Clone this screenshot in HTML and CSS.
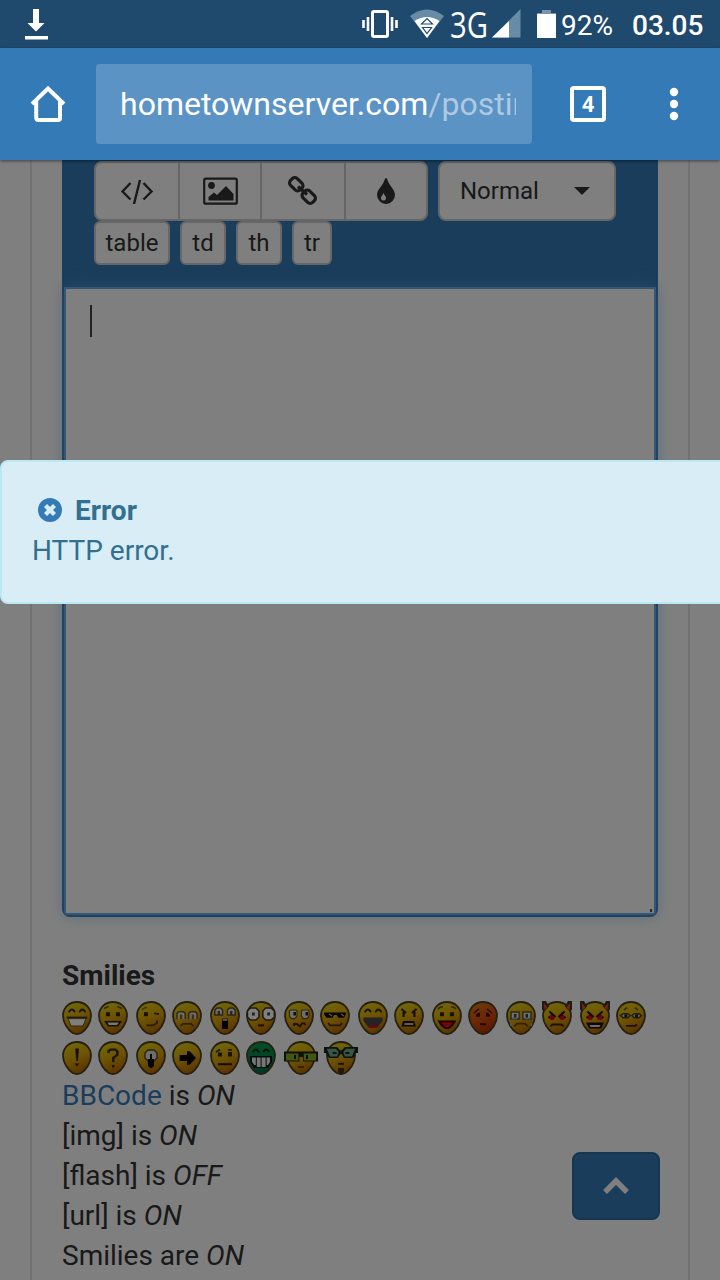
FILE: index.html
```html
<!DOCTYPE html>
<html lang="en">
<head>
<meta charset="utf-8">
<title>Post a reply</title>
<link rel="stylesheet" href="styles.css">
</head>
<body>
<svg class="defs" width="0" height="0" aria-hidden="true">
  <defs>
    <linearGradient id="yellow" x1="0.3" y1="0" x2="0.7" y2="1"><stop offset="0" stop-color="#e2d210"/><stop offset="0.45" stop-color="#dca808"/><stop offset="1" stop-color="#b06000"/></linearGradient>
    <linearGradient id="red" x1="0.2" y1="0" x2="0.7" y2="1"><stop offset="0" stop-color="#d87a10"/><stop offset="0.5" stop-color="#d85010"/><stop offset="1" stop-color="#b42c00"/></linearGradient>
    <linearGradient id="green" x1="0" y1="0" x2="0" y2="1"><stop offset="0" stop-color="#06a050"/><stop offset="1" stop-color="#027048"/></linearGradient>
    <path id="head" d="M7.500.5C11.500.5 14.500 3.400 14.500 7.400C14.500 11 11.900 14.600 9.600 16Q7.500 17 5.400 16C3.100 14.600.5 11 .5 7.400C.5 3.400 3.500.5 7.500.5Z" stroke="#4c4022" stroke-width=".9"/>
    <g id="carets" fill="none" stroke="#2a2004" stroke-width=".9"><path d="M3.300 5.600 4.500 4.300H5.400L6.600 5.600M8.600 5.600 9.700 4.300H10.600L11.800 5.600"/></g>
    <g id="horns"><path d="M0 0H2L3.600 2.600 1 5.500 0 4.200ZM15 0H13L11.400 2.600 14 5.500 15 4.200Z" fill="#3c3430"/><path d="M.8 1 2.700 3 1.300 4.800ZM14.200 1 12.300 3 13.700 4.800Z" fill="#f04812"/><path d="M2.400 0H5L3.500 1ZM10 0H12.600L11.500 1Z" fill="#ddd"/></g>
    <g id="rage"><circle cx="5" cy="8.100" r="1.400" fill="#e00808"/><circle cx="10" cy="8.100" r="1.400" fill="#e00808"/><path d="M3.700 5.200 6.800 8M11.300 5.200 8.200 8" stroke="#160c00" stroke-width="1"/><path d="M3.100 8.200H4M11 8.200H11.900" stroke="#200" stroke-width=".9"/></g>
  </defs>
</svg>

<header class="status">
  <svg class="download" width="24" height="32" viewBox="0 0 24 32"><path d="M9 1H15V15H20.500L12 23.500 3.500 15H9ZM1 28H24V31.500H1Z" fill="#fff"/></svg>
  <div class="status-right">
    <svg width="164" height="40" viewBox="360 4 164 40">
      <rect x="372.500" y="11.500" width="15" height="25" rx="1.500" fill="none" stroke="#fff" stroke-width="3"/>
      <path d="M363.500 20V28M368 17V31M392 17V31M396.500 20V28" stroke="#fff" stroke-width="2.600"/>
      <path d="M410 16Q427 3 444 16L427 38Z" fill="#688ba6"/>
      <path d="M414.500 21Q427 13 439.500 21L427 38Z" fill="#fff"/>
      <path d="M421.500 24H432.500L427 18.500ZM422.500 27.500H431.500L427 33.500Z" fill="#fff" stroke="#1f4a6e" stroke-width="1.200"/>
      <text x="450" y="38" textLength="38" lengthAdjust="spacingAndGlyphs" class="network">3G</text>
      <path d="M520.500 9V37.500H492Z" fill="#688ba6"/><path d="M509 21V37.500H492Z" fill="#fff"/>
    </svg>
    <svg class="battery" width="19" height="30" viewBox="0 0 19 30"><path d="M5 1H14V4H19V6H0V4H5Z" fill="#7896ae"/><path d="M0 5H19V29H0Z" fill="#fff"/></svg>
    <span class="percent">92%</span>
    <span class="clock">03.05</span>
  </div>
</header>

<nav class="browser">
  <svg class="home" width="36" height="36" viewBox="0 0 36 36"><path d="M2 18 18 2.500 34 18M6.200 15V31Q6.200 34 8.200 34H28Q30 34 30 32V15" fill="none" stroke="#fff" stroke-width="4"/></svg>
  <div class="address"><div class="url">hometownserver.com<span class="path">/postin</span></div></div>
  <div class="tabs">4</div>
  <svg class="more" width="10" height="34" viewBox="0 0 10 34"><circle cx="5" cy="5" r="4.200" fill="#fff"/><circle cx="5" cy="17" r="4.200" fill="#fff"/><circle cx="5" cy="29" r="4.200" fill="#fff"/></svg>
</nav>

<main class="viewport">
  <section class="panel">
    <div class="editor">
      <div class="toolbar">
        <div class="tools">
          <div class="group">
            <button class="btn code"><svg width="34" height="26" viewBox="0 0 34 26"><path d="M10.500 5 2.500 13.500 10.500 21.500M23.500 5 31.500 13.500 23.500 21.500M20 2 14 26" fill="none" stroke="#333" stroke-width="2.400"/></svg></button>
            <button class="btn image"><svg width="36" height="28" viewBox="0 0 36 28"><rect x="2.200" y="1.700" width="32.600" height="25" rx="1.500" fill="none" stroke="#333" stroke-width="2.200"/><circle cx="9.500" cy="8.500" r="3.400" fill="#333"/><path d="M6.500 23.500V20L12 15.500 15 18 24 9 31.500 17V23.500Z" fill="#333"/></svg></button>
            <button class="btn link"><svg width="30" height="30" viewBox="0 0 30 30"><g fill="none" stroke="#333" stroke-width="3.200"><rect x="1.500" y="3.500" width="13.500" height="9.500" rx="3.500" transform="rotate(45 8.250 8.250)"/><rect x="14" y="16" width="13.500" height="9.500" rx="3.500" transform="rotate(45 20.750 20.750)"/><path d="M10 10.500 19 18.500"/></g></svg></button>
            <button class="btn drop"><svg width="20" height="28" viewBox="0 0 20 28"><path d="M10 1Q11 1 11.500 3C13 9 19 12 19 18A9 9 0 0 1 1 18C1 12 7 9 8.500 3Q9 1 10 1Z" fill="#333"/><path d="M7.500 16C8 18 10 19 10 21A2.500 2.500 0 0 1 5 21C5 19 7 18 7.500 16Z" fill="#fff"/></svg></button>
          </div>
          <button class="btn select"><span>Normal</span><i class="arrow"></i></button>
        </div>
        <div class="tags">
          <button class="btn tag">table</button><button class="btn tag narrow">td</button><button class="btn tag narrow">th</button><button class="btn tag tiny">tr</button>
        </div>
      </div>
      <div class="message"><i class="caret"></i><i class="grip"></i></div>
    </div>
    <div class="info">
      <strong>Smilies</strong>
      <div class="smilies">
        <svg viewBox="0 0 15 17"><use href="#head" fill="url(#yellow)"/><use href="#carets"/><path d="M2.400 8.300H12.600" stroke="#443200"/><path d="M3 8.800H12L10.500 12.500H4.500Z" fill="#fff" stroke="#665020" stroke-width=".5"/></svg>
        <svg viewBox="0 0 15 17"><use href="#head" fill="url(#yellow)"/><path d="M3 3.700 5.300 2.800M9.700 2.800 12 3.700" stroke="#655000" stroke-width=".8"/><path d="M4 5.600H6V7.600H4ZM9 5.600H11V7.600H9Z" fill="#302400"/><path d="M3 10H12L10 12.800H5Z" fill="#2a2000"/><path d="M4.700 10.800H10.500L9.500 12H5.500Z" fill="#eee"/></svg>
        <svg viewBox="0 0 15 17"><use href="#head" fill="url(#yellow)"/><path d="M3 4.300 4.500 3.300H5.600" fill="none" stroke="#806400" stroke-width=".7"/><path d="M4 5.600H6V7.600H4Z" fill="#302400"/><path d="M9 6.200 11.500 6.500M5.300 12.200H8.500L10.500 11V9.700" fill="none" stroke="#4a3400" stroke-width=".9"/></svg>
        <svg viewBox="0 0 15 17"><use href="#head" fill="url(#yellow)"/><path d="M2.500 9V6.200L3.500 5.400H5.700L6.600 6.200V9M8.400 9V6.200L9.400 5.400H11.600L12.500 6.200V9" fill="#ddd" stroke="#5d4d1a" stroke-width=".7"/><path d="M3.900 6.700H5.200V9H3.900ZM9.800 6.700H11.100V9H9.800Z" fill="#846020"/><path d="M4.200 12.500 5.500 11.400H9.500L10.800 12.500" fill="none" stroke="#644000" stroke-width=".9"/></svg>
        <svg viewBox="0 0 15 17"><use href="#head" fill="url(#yellow)"/><path d="M2.400 7V4.500L3.500 3.500H5.400L6.300 4.500V7ZM8.700 7V4.500L9.800 3.500H11.500L12.600 4.500V7Z" fill="#ddd" stroke="#554b28" stroke-width=".7"/><path d="M3.800 5H5V7H3.800ZM10 5H11.200V7H10Z" fill="#554b30"/><path d="M6 8.800H9V14H6Z" fill="#090600"/><path d="M6.300 9H8.700V9.900H6.300Z" fill="#bbb"/></svg>
        <svg viewBox="0 0 15 17"><use href="#head" fill="url(#yellow)"/><path d="M2.200 3.500H5L6.500 5V8L5 9.500H2.200L.7 8V5ZM9.800 3.500H12.600L14.200 5V8L12.600 9.500H9.800L8.400 8V5Z" fill="#fff" stroke="#443420" stroke-width=".8"/><path d="M3 5.800H4.400V7.200H3ZM10.600 5.800H12V7.200H10.600Z" fill="#444"/><path d="M6 12.200H9" stroke="#382000"/></svg>
        <svg viewBox="0 0 15 17"><use href="#head" fill="url(#yellow)"/><path d="M3.200 4.500H6L6.500 5V7.500L5.500 8.800H3.700L2.700 7.500V5ZM9.400 4.500H12L12.500 5V7.500L11.500 8.800H9.700L8.700 7.500V5Z" fill="#ddd" stroke="#665020" stroke-width=".6"/><path d="M4.700 5.500H6V7.200H4.700ZM10.800 5.500H12V7.200H10.800Z" fill="#222"/><path d="M5 12.500V11.500H6.500L8 12.700 9 11.200H10.200L10.800 12" fill="none" stroke="#382000" stroke-width=".9"/></svg>
        <svg viewBox="0 0 15 17"><use href="#head" fill="url(#yellow)"/><path d="M2 5.800H13V6.600L12 8.400H9.300L8.300 7H7L6.300 8.400H3.300L2 6.600Z" fill="#100b00"/><path d="M4.500 6.500 6 7.500M10.500 6.500 12 7.500" stroke="#aaa" stroke-width=".7"/><path d="M4 11 5 12.200H10L11 11" fill="none" stroke="#4a2800" stroke-width=".9"/></svg>
        <svg viewBox="0 0 15 17"><use href="#head" fill="url(#yellow)"/><use href="#carets"/><path d="M2.700 8.300H12.300V10L9.700 13.300H5.300L2.700 10Z" fill="#4a4747"/><path d="M5.500 12.200H9.500V13.500H5.500Z" fill="#d01010"/></svg>
        <svg viewBox="0 0 15 17"><use href="#head" fill="url(#yellow)"/><path d="M3.700 4 6 6M11.300 4 9 6M4.800 5.500V8M10.200 5.500V8" stroke="#302000" stroke-width="1.100"/><path d="M4.500 10H10L11 12.800H3.700Z" fill="#1c1400"/><path d="M5.200 11H9.700V12H5.200Z" fill="#bbb"/></svg>
        <svg viewBox="0 0 15 17"><use href="#head" fill="url(#yellow)"/><path d="M3 4 4.300 3H5.500M9.500 3H10.700L12 4" fill="none" stroke="#655000" stroke-width=".8"/><path d="M4 5.600H6V7.600H4ZM9 5.600H11V7.600H9Z" fill="#302400"/><path d="M2.700 9.800H12.200L10.500 12.500 8.500 14H6.500L4.500 12.500Z" fill="#280800"/><path d="M4.500 10.600H10.500L8.500 13H6.500Z" fill="#f00808"/></svg>
        <svg viewBox="0 0 15 17"><use href="#head" fill="url(#red)"/><path d="M3 6 5.500 4M12 6 9.500 4" stroke="#4a1800" stroke-width=".8"/><path d="M4 7 5 5.900H6V7.900H4ZM9 5.900H10L11 7V7.900H9Z" fill="#401000"/><path d="M6 11.600H9" stroke="#401000"/></svg>
        <svg viewBox="0 0 15 17"><use href="#head" fill="url(#yellow)"/><path d="M2.500 9V5.500H6.600V9ZM8.400 9V5.500H12.500V9Z" fill="#ddd" stroke="#5d4d30" stroke-width=".7"/><path d="M4 6.500H5.200V8.500H4ZM9.800 6.500H11V8.500H9.800Z" fill="#443c36"/><path d="M3 8.700H5.500M9.500 8.700H12M2.500 11V12.500M12.500 11V12.500" stroke="#8cb9c9" stroke-width=".8"/><path d="M4.200 12.700 5.500 11.300H9.500L10.800 12.700" fill="none" stroke="#644000" stroke-width=".9"/></svg>
        <svg viewBox="0 0 15 17"><use href="#head" fill="url(#yellow)"/><use href="#horns"/><use href="#rage"/><path d="M4.300 12.700 5.200 11.700H9.800L10.700 12.700" fill="none" stroke="#382000"/></svg>
        <svg viewBox="0 0 15 17"><use href="#head" fill="url(#yellow)"/><use href="#horns"/><use href="#rage"/><path d="M3 10.800H12L10.500 13.800H4.500Z" fill="#1c1000"/><path d="M4.800 12H10.200L9.700 13H5.300Z" fill="#ddd"/></svg>
        <svg viewBox="0 0 15 17"><use href="#head" fill="url(#yellow)"/><path d="M4 4.500 5.500 3.300M9.500 3.300 11 4.500" stroke="#655000" stroke-width=".8"/><path d="M2.200 7.300 3.500 6.300H6L7 7.300 6 8.400H3.500ZM8 7.300 9 6.300H11.500L12.800 7.300 11.500 8.400H9Z" fill="#bbb" stroke="#493a18" stroke-width=".7"/><path d="M4.200 6.600H5.700V8H4.200ZM9.500 6.600H11V8H9.500Z" fill="#222"/><path d="M5 12.400H9.500L10.500 11.700" fill="none" stroke="#382000" stroke-width=".9"/></svg>
      </div>
      <div class="smilies">
        <svg viewBox="0 0 15 17"><use href="#head" fill="url(#yellow)"/><path d="M6.600 3.800H8.500L7.900 10H7.200ZM6.300 11.200H8.700L7.500 12.600Z" fill="#2a1c00"/></svg>
        <svg viewBox="0 0 15 17"><use href="#head" fill="url(#yellow)"/><path d="M5.200 6V5L6.200 4.300H8.800L9.700 5.200V6.800L7.600 8.500V10.500M7.600 12V13.300" fill="none" stroke="#3c2800" stroke-width="1.200"/></svg>
        <svg viewBox="0 0 15 17"><use href="#head" fill="url(#yellow)"/><path d="M6 4.500H9L10.500 6V8.500L9 10H6L4.500 8.500V6Z" fill="#ddd" stroke="#504522" stroke-width=".7"/><path d="M7 6.500H8V9H9V12.500L7.500 13.800 6 12.500V9H7Z" fill="#090600"/></svg>
        <svg viewBox="0 0 15 17"><use href="#head" fill="url(#yellow)"/><path d="M3.800 7H7.500V5L9 5.200 12 8.500 9 11.700 7.500 12V10H3.800Z" fill="#080500"/></svg>
        <svg viewBox="0 0 15 17"><use href="#head" fill="url(#yellow)"/><path d="M3 5.500 5 4.200M9 4.400H11" stroke="#443000" stroke-width=".9"/><path d="M4 5.700H6V7.700H4ZM9 5.500H11V7.700H9Z" fill="#302400"/><path d="M4 11.600H11" stroke="#2a1800"/></svg>
        <svg viewBox="0 0 15 17"><use href="#head" fill="url(#green)"/><use href="#carets"/><path d="M2 7.500H13V10.500L11 13.500H4L2 10.500Z" fill="#101c18"/><path d="M3 8.300H4.900V12H4.200L3 10.500ZM5.400 8.300H7.300V13H5.400ZM7.800 8.300H9.800V13H7.800ZM10.300 8.300H12V10.500L11 12H10.300Z" fill="#eee"/></svg>
        <svg class="wide" viewBox="-1 0 17 17"><use href="#head" fill="url(#yellow)"/><path d="M-1 5.300H16V10.300H8.500V8H6.700V10.300H-1Z" fill="#1c2010"/><path d="M0 6.200H6.200V9.800H0ZM8.900 6.200H15V9.800H8.900Z" fill="#88ae20"/><path d="M4 7H5V9H4ZM10 7H11V9H10Z" fill="#101800"/><path d="M6 13H9" stroke="#573400" stroke-width=".8"/></svg>
        <svg class="wide tall" viewBox="-1 -1 17 18"><use href="#head" fill="url(#yellow)"/><path d="M-1 3H5.500L7.500 5 9.500 3H16V6H15L13.500 8.500H9L7.800 6.500H7.200L6 8.500H1.500L0 6H-1Z" fill="#14221e"/><path d="M.4 3.900H5L6.400 5.500 5.600 7.700H2ZM14.600 3.900H10L8.600 5.500 9.400 7.700H13Z" fill="#74aa88"/><path d="M3.300 5.500H5.300V6.500H3.300ZM9.700 5.500H11.700V6.500H9.700Z" fill="#182820"/><path d="M6 11.400H9" stroke="#382000"/><path d="M6 13.500H9V15.500L7.500 17 6 15.500Z" fill="#453018"/></svg>
      </div>
      <div><a>BBCode</a> is <em>ON</em></div>
      <div>[img] is <em>ON</em></div>
      <div>[flash] is <em>OFF</em></div>
      <div>[url] is <em>ON</em></div>
      <div>Smilies are <em>ON</em></div>
    </div>
  </section>
  <button class="to-top"><svg width="28" height="20" viewBox="0 0 28 20"><path d="M3 16 14 5 25 16" fill="none" stroke="#fff" stroke-width="5.500"/></svg></button>
  <div class="dim"></div>
  <div class="alert">
    <div class="alert-title"><svg width="24" height="24" viewBox="0 0 24 24"><circle cx="12" cy="12" r="12" fill="#337ab7"/><path d="M7.500 7.500 16.500 16.500M16.500 7.500 7.500 16.500" stroke="#d9edf7" stroke-width="4.300"/></svg><strong>Error</strong></div>
    <div>HTTP error.</div>
  </div>
</main>
</body>
</html>
```

FILE: styles.css
```css
* { box-sizing: border-box; }
html, body { height: 100%; }
body {
  margin: 0;
  display: flex;
  flex-direction: column;
  overflow: hidden;
  font: 28px/40px Roboto, sans-serif;
  color: #333;
}
svg { display: block; flex: none; }
.defs { position: absolute; }
button { font: inherit; color: inherit; margin: 0; }

.status {
  flex: none;
  height: 48px;
  background: #1f4a6e;
  color: #fff;
  display: flex;
  align-items: flex-start;
  justify-content: space-between;
  padding: 0 16px 0 24px;
}
.download { margin-top: 8px; }
.status-right { display: flex; align-items: flex-start; line-height: 48px; padding-top: 2px; }
.status-right > svg:first-child { margin-top: 2px; }
.network { font: 36px "Open Sans", sans-serif; fill: #fff; }
.battery { margin: 7px 0 0 13px; }
.percent { margin-left: 5px; width: 71px; }
.clock { font-weight: 500; width: 72px; }

.browser {
  flex: none;
  height: 112px;
  background: #337ab7;
  display: flex;
  align-items: center;
  padding: 0 41px 0 30px;
  position: relative;
  z-index: 2;
  box-shadow: 0 1px 3px rgba(0, 0, 0, .5);
}
.address {
  width: 436px;
  height: 80px;
  margin-left: 30px;
  padding: 0 16px 0 24px;
  border-radius: 4px;
  background: #5c93c5;
}
.url { overflow: hidden; white-space: nowrap; font-size: 32px; line-height: 80px; color: #fff; }
.path { color: #aec9e2; }
.tabs {
  width: 36px;
  height: 36px;
  margin-left: 38px;
  border: 4px solid #fff;
  border-radius: 4px;
  color: #fff;
  font-size: 22px;
  font-weight: 700;
  line-height: 30px;
  text-align: center;
}
.more { margin-left: 63px; }

.viewport { flex: 1; position: relative; overflow: hidden; background: #fff; padding: 0 30px; }
.panel { height: 1120px; border: solid #e2e2e2; border-width: 0 2px; padding: 0 30px; }
.editor { height: 757px; padding: 0 2px 2px; background: #337ab7; border-radius: 0 0 8px 8px; display: flex; flex-direction: column; }
.toolbar { height: 127px; padding: 1px 0 0 30px; }
.tools { display: flex; gap: 10px; }
.group { display: flex; width: 334px; }
.btn {
  display: flex;
  align-items: center;
  justify-content: center;
  height: 60px;
  padding: 0;
  border: 2px solid #ccc;
  border-radius: 8px;
  background: #fff;
  font-size: 24px;
  line-height: 34px;
}
.group .btn { border-radius: 0; margin-left: -2px; }
.group .code { width: 86px; margin-left: 0; border-radius: 8px 0 0 8px; }
.image { width: 84px; }
.link { width: 86px; }
.group .drop { width: 84px; border-radius: 0 8px 8px 0; }
.select { width: 178px; justify-content: space-between; padding: 0 24px 0 20px; }
.arrow { border: 8px solid transparent; border-top-color: #333; border-bottom: 0; }
.tags { display: flex; gap: 10px; }
.tag { width: 76px; height: 44px; border-radius: 6px; }
.narrow { width: 46px; }
.tiny { width: 40px; }
.message {
  flex: 1;
  position: relative;
  padding: 16px 24px;
  background: #fff;
  border: 2px solid #66afe9;
  border-radius: 0 0 3px 3px;
  box-shadow: 0 0 16px rgba(102, 175, 233, .6);
}
.caret { display: block; width: 2px; height: 32px; background: #444; }
.grip { position: absolute; right: 2px; bottom: 1px; width: 2px; height: 3px; background: #555; }

.info { padding-top: 39px; }
.info strong { display: block; height: 39px; }
.info a { color: #337ab7; }
.smilies { display: flex; height: 40px; align-items: flex-end; }
.smilies + .smilies { margin-bottom: 1px; }
.smilies svg { width: 30px; height: 34px; margin-right: 6px; filter: blur(.45px); }
.smilies svg:nth-child(even) { margin-right: 8px; }
.smilies .wide { width: 34px; }
.smilies .tall { height: 36px; }

.to-top {
  position: absolute;
  right: 60px;
  bottom: 60px;
  width: 88px;
  height: 68px;
  display: flex;
  align-items: center;
  justify-content: center;
  border: 2px solid #2e6da4;
  border-radius: 8px;
  background: #337ab7;
}
.dim { position: absolute; inset: 0; background: rgba(0, 0, 0, .5); }
.alert {
  position: absolute;
  top: 300px;
  left: 0;
  width: 740px;
  height: 144px;
  padding: 29px 30px;
  border: 2px solid #bce8f1;
  border-radius: 8px;
  background: #d9edf7;
  color: #31708f;
}
.alert-title { display: flex; align-items: center; gap: 13px; padding-left: 6px; }
.alert-title svg { margin-top: -2px; }
```
